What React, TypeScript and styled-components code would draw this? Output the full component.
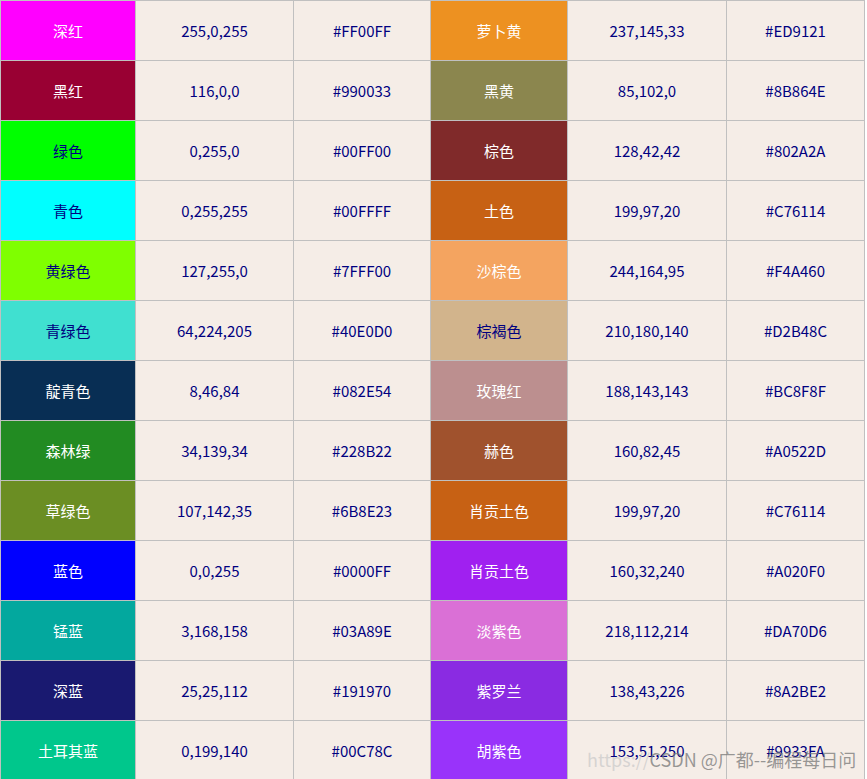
import React from "react";
import styled, { createGlobalStyle } from "styled-components";

const Global = createGlobalStyle`
  html, body { margin: 0; padding: 0; background: #ffffff; }
  body { font-family: "Noto Sans CJK SC", "Noto Sans", sans-serif; }
`;

type Entry = { name: string; rgb: string; hex: string; dark?: boolean };

const left: Entry[] = [
  { name: "深红", rgb: "255,0,255", hex: "#FF00FF" },
  { name: "黑红", rgb: "116,0,0", hex: "#990033" },
  { name: "绿色", rgb: "0,255,0", hex: "#00FF00", dark: true },
  { name: "青色", rgb: "0,255,255", hex: "#00FFFF", dark: true },
  { name: "黄绿色", rgb: "127,255,0", hex: "#7FFF00", dark: true },
  { name: "青绿色", rgb: "64,224,205", hex: "#40E0D0", dark: true },
  { name: "靛青色", rgb: "8,46,84", hex: "#082E54" },
  { name: "森林绿", rgb: "34,139,34", hex: "#228B22" },
  { name: "草绿色", rgb: "107,142,35", hex: "#6B8E23" },
  { name: "蓝色", rgb: "0,0,255", hex: "#0000FF" },
  { name: "锰蓝", rgb: "3,168,158", hex: "#03A89E" },
  { name: "深蓝", rgb: "25,25,112", hex: "#191970" },
  { name: "土耳其蓝", rgb: "0,199,140", hex: "#00C78C" },
];

const right: Entry[] = [
  { name: "萝卜黄", rgb: "237,145,33", hex: "#ED9121" },
  { name: "黑黄", rgb: "85,102,0", hex: "#8B864E" },
  { name: "棕色", rgb: "128,42,42", hex: "#802A2A" },
  { name: "土色", rgb: "199,97,20", hex: "#C76114" },
  { name: "沙棕色", rgb: "244,164,95", hex: "#F4A460" },
  { name: "棕褐色", rgb: "210,180,140", hex: "#D2B48C", dark: true },
  { name: "玫瑰红", rgb: "188,143,143", hex: "#BC8F8F" },
  { name: "赫色", rgb: "160,82,45", hex: "#A0522D" },
  { name: "肖贡土色", rgb: "199,97,20", hex: "#C76114" },
  { name: "肖贡土色", rgb: "160,32,240", hex: "#A020F0" },
  { name: "淡紫色", rgb: "218,112,214", hex: "#DA70D6" },
  { name: "紫罗兰", rgb: "138,43,226", hex: "#8A2BE2" },
  { name: "胡紫色", rgb: "153,51,250", hex: "#9933FA" },
];

const Page = styled.div`
  position: relative;
  width: 867px;
  height: 779px;
  overflow: hidden;
`;

const Grid = styled.div`
  display: grid;
  grid-template-columns: 134px 157px 136px 136px 158px 137px;
  grid-auto-rows: 59px;
  gap: 1px;
  padding: 1px;
  background: #c0c0c0;
  width: max-content;
`;

const Cell = styled.div`
  display: flex;
  align-items: center;
  justify-content: center;
  font-size: 15px;
  color: #000080;
  background: #f5ede7;
  white-space: nowrap;
`;

const Swatch = styled(Cell)<{ $bg: string; $dark?: boolean }>`
  background: ${(p) => p.$bg};
  color: ${(p) => (p.$dark ? "#000080" : "#ffffff")};
`;

const Watermark = styled.div`
  position: absolute;
  left: 587px;
  top: 746px;
  font-size: 18px;
  color: rgba(120, 120, 120, 0.75);
  white-space: nowrap;
  font-family: "Noto Sans CJK SC", "Noto Sans", sans-serif;
  span {
    color: rgba(200, 200, 200, 0.7);
  }
`;

export default function App() {
  return (
    <Page>
      <Global />
      <Grid>
        {left.map((l, i) => {
          const r = right[i];
          return (
            <React.Fragment key={i}>
              <Swatch $bg={l.hex} $dark={l.dark}>{l.name}</Swatch>
              <Cell>{l.rgb}</Cell>
              <Cell>{l.hex}</Cell>
              <Swatch $bg={r.hex} $dark={r.dark}>{r.name}</Swatch>
              <Cell>{r.rgb}</Cell>
              <Cell>{r.hex}</Cell>
            </React.Fragment>
          );
        })}
      </Grid>
      <Watermark>
        <span>https://</span>CSDN @广都--编程每日问
      </Watermark>
    </Page>
  );
}
